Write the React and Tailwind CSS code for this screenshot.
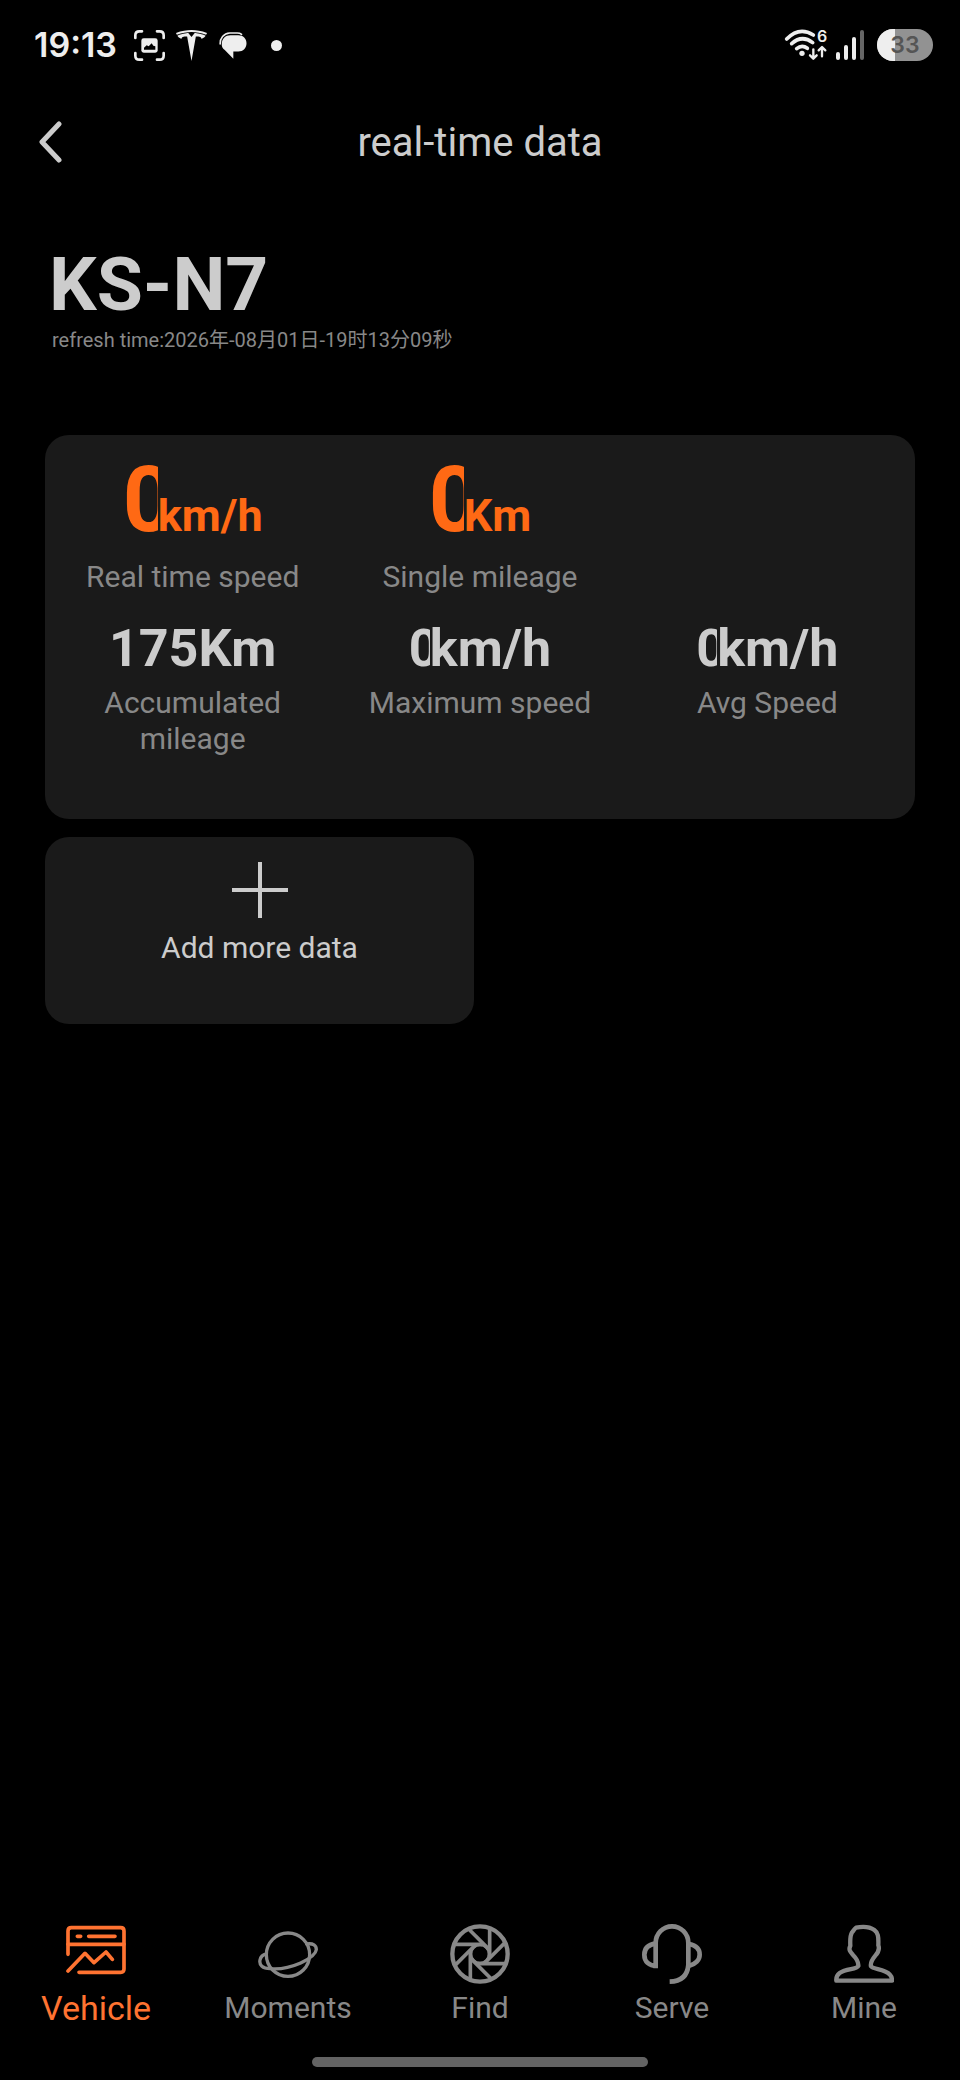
import { useState } from 'react'
import { SiTesla } from 'react-icons/si'

const mainStats = [
  { value: '0', unit: 'km/h', label: 'Real time speed' },
  { value: '0', unit: 'Km', label: 'Single mileage' },
]

const stats = [
  { value: '175', unit: 'Km', label: 'Accumulated mileage' },
  { value: '0', unit: 'km/h', label: 'Maximum speed' },
  { value: '0', unit: 'km/h', label: 'Avg Speed' },
]

const tabs = [
  { name: 'Vehicle', Icon: VehicleIcon },
  { name: 'Moments', Icon: PlanetIcon },
  { name: 'Find', Icon: ApertureIcon },
  { name: 'Serve', Icon: HeadsetIcon },
  { name: 'Mine', Icon: PersonIcon },
]

function TabSvg({ children }) {
  return (
    <svg
      viewBox="0 0 180 180"
      className="w-[60px] h-[60px]"
      fill="none"
      stroke="currentColor"
      strokeWidth="11"
      strokeLinecap="round"
      strokeLinejoin="round"
      aria-hidden="true"
    >
      {children}
    </svg>
  )
}

function VehicleIcon() {
  return (
    <TabSvg>
      <path d="M6 91V21Q6 11 16 11H164Q174 11 174 21V135Q174 145 164 145H39" />
      <path d="M6 61H174M34 37H44M68 37H147" />
      <path d="M6 141L57 88L84 116L120 84L139 106" />
    </TabSvg>
  )
}

function PlanetIcon() {
  return (
    <TabSvg>
      <g strokeWidth="10">
        <circle cx="90" cy="92" r="65" />
        <path d="M146 60C166 57 175 65 175 77C173 94 152 106 128 117C98 130 62 137 36 134C14 133 3 124 6 108C8 98 15 92 25 90" />
      </g>
    </TabSvg>
  )
}

function ApertureIcon() {
  const blades = [0, 45, 90, 135, 180, 225, 270, 315]
  return (
    <TabSvg>
      <g strokeWidth="13">
        <circle cx="90" cy="90" r="83" />
        <circle cx="90" cy="90" r="28" strokeWidth="10" />
        {blades.map((deg) => (
          <path key={deg} d="M119 16V96" strokeWidth="11" transform={`rotate(${deg} 90 90)`} />
        ))}
      </g>
    </TabSvg>
  )
}

function HeadsetIcon() {
  return (
    <TabSvg>
      <g strokeWidth="14" strokeLinecap="butt">
        <path d="M41 133V57A49 50 0 0 1 139 57V123Q135 172 83 173" />
        <path d="M41 58C17 62 7 76 7 92C7 112 20 125 44 125" />
        <path d="M142 60C163 64 173 76 173 92C173 108 160 121 142 125" />
      </g>
    </TabSvg>
  )
}

function PersonIcon() {
  return (
    <TabSvg>
      <path
        strokeWidth="13"
        d="M66 11C86 7 108 9 121 18C132 26 134 36 133 64C138 77 133 85 124 95C114 107 108 116 111 127C118 137 151 134 168 152C174 158 174 164 174 170H7C6 160 9 153 17 147C38 133 67 137 73 126C74 113 66 102 57 93C48 83 43 77 49 65C48 46 49 33 54 25C59 21 59 16 66 11Z"
      />
    </TabSvg>
  )
}

function StatusBar() {
  return (
    <div className="h-[90px] pl-[34px] pr-[27px] flex items-center justify-between text-[#eeeeee] font-['Inter',sans-serif]">
      <div className="flex items-center">
        <span className="text-[34px] leading-10 font-semibold">19:13</span>
        {/* Screenshot */}
        <svg viewBox="0 0 93 93" className="w-[31px] h-[31px] ml-[17px]" fill="none" stroke="currentColor" strokeWidth="8" strokeLinecap="round" aria-hidden="true">
          <path d="M4 24V16Q4 4 16 4H24M69 4H77Q89 4 89 16V24M89 69V77Q89 89 77 89H69M24 89H16Q4 89 4 77V69" />
          <rect x="22" y="25" width="49" height="43" rx="7" fill="currentColor" stroke="none" />
          <path d="M30 59V53L38 46L44 49L53 40L58 47L64 49V59Z" fill="#000" stroke="none" />
        </svg>
        <SiTesla className="w-[31px] h-[31px] ml-[11px]" />
        {/* Messages */}
        <svg viewBox="0 0 84 82" className="w-7 h-[27px] ml-3" fill="currentColor" aria-hidden="true">
          <path d="M34 10H58C73 10 83 20 83 34C83 49 73 59 58 59H43V81L17 55C10 50 7 43 8 35C9 20 19 10 34 10Z" />
          <path d="M3 36C2 20 14 4 32 3H55Q63 3 68 7" fill="none" stroke="currentColor" strokeWidth="5" strokeLinecap="round" />
        </svg>
        <span className="w-[11px] h-[11px] rounded-full bg-[#eeeeee] ml-6" />
      </div>

      <div className="flex items-center">
        {/* Wi-Fi 6 with traffic arrows */}
        <svg viewBox="130 87 129 96" className="w-[43px] h-8 overflow-visible" fill="none" stroke="currentColor" strokeLinecap="round" strokeLinejoin="round" aria-hidden="true">
          <path strokeWidth="11" d="M138 117Q176 78 218 105M153 131Q184 103 216 128M168 146Q184 133 200 145" />
          <circle cx="184" cy="160" r="8" fill="currentColor" stroke="none" />
          <path strokeWidth="7" d="M218 148V175M208 166L218 176L228 166M244 169V142M234 151L244 141L254 151" />
          <text x="229" y="127" fontSize="48" fontWeight="600" fill="currentColor" stroke="none">6</text>
        </svg>
        <div className="flex items-end gap-1 ml-[9px]">
          <span className="w-1 h-2 rounded-full bg-[#eeeeee]" />
          <span className="w-1 h-[15px] rounded-full bg-[#eeeeee]" />
          <span className="w-1 h-[23px] rounded-full bg-[#eeeeee]" />
          <span className="w-1 h-[30px] rounded-full bg-[#666666]" />
        </div>
        <div className="relative w-14 h-8 ml-[13px] rounded-full overflow-hidden bg-[#929292]">
          <div className="absolute inset-y-0 left-0 w-[18px] bg-[#eeeeee]" />
          <span className="relative block text-center text-[23px] leading-8 font-semibold text-[#555555]">33</span>
        </div>
      </div>
    </div>
  )
}

function MainStat({ value, unit, label }) {
  return (
    <div className="text-center">
      <div className="flex items-baseline justify-center font-bold text-[#ff6914]">
        <span className="w-[35px] overflow-hidden text-left text-[90px] leading-[100px]">{value}</span>
        <span className="text-[45px] leading-[64px]">{unit}</span>
      </div>
      <p className="mt-2 text-[30px] leading-9 text-[#888888]">{label}</p>
    </div>
  )
}

function Stat({ value, unit, label }) {
  return (
    <div className="text-center">
      <div className="flex items-baseline justify-center font-bold text-[52px] leading-[64px] text-[#cccccc]">
        {/* the value box is narrower than a lone digit */}
        <span className={value.length === 1 ? 'w-[21px] overflow-hidden text-left' : ''}>{value}</span>
        <span>{unit}</span>
      </div>
      <p className="mt-1 px-8 text-[30px] leading-9 text-[#888888]">{label}</p>
    </div>
  )
}

function App() {
  const [active, setActive] = useState('Vehicle')

  return (
    <div className="min-h-screen flex flex-col bg-black text-[#cccccc] font-['Roboto','Noto_Sans_CJK_SC',sans-serif]">
      <StatusBar />

      <header className="h-[106px] px-9 grid grid-cols-[1fr_auto_1fr] items-center">
        <button type="button" aria-label="Back" className="justify-self-start">
          <svg viewBox="0 0 28 44" className="w-7 h-11" fill="none" stroke="currentColor" strokeWidth="5" strokeLinecap="round" strokeLinejoin="round">
            <path d="M23 3L6 21L23 39" />
          </svg>
        </button>
        <h1 className="text-[40px] leading-[60px]">real-time data</h1>
      </header>

      <main className="px-[45px] pt-12">
        <h2 className="pl-1 text-[75px] leading-20 font-bold">KS-N7</h2>
        <p className="pl-[7px] text-[20px] leading-8 text-[#888888]">
          refresh time:2026年-08月01日-19时13分09秒
        </p>

        <section className="mt-[79px] px-1 pt-4 pb-[62px] rounded-3xl bg-[#1a1a1a]">
          <div className="grid grid-cols-3">
            {mainStats.map((s) => (
              <MainStat key={s.label} {...s} />
            ))}
          </div>
          <div className="grid grid-cols-3 mt-[22px]">
            {stats.map((s) => (
              <Stat key={s.label} {...s} />
            ))}
          </div>
        </section>

        <div className="mt-[18px] grid grid-cols-2 gap-3">
          <button type="button" className="flex flex-col items-center pt-[25px] pb-[58px] rounded-3xl bg-[#1a1a1a]">
            <svg viewBox="0 0 56 56" className="w-14 h-14" stroke="currentColor" strokeWidth="4" aria-hidden="true">
              <path d="M28 0V56M0 28H56" />
            </svg>
            <span className="mt-3 text-[30px] leading-9">Add more data</span>
          </button>
        </div>
      </main>

      <nav className="mt-auto grid grid-cols-5">
        {tabs.map(({ name, Icon }) => (
          <button
            key={name}
            type="button"
            onClick={() => setActive(name)}
            className={`flex flex-col items-center gap-1.5 ${
              active === name ? 'text-[34px] text-[#ff7331]' : 'text-[30px] text-[#888888]'
            }`}
          >
            <Icon />
            <span className="leading-9">{name}</span>
          </button>
        ))}
      </nav>

      {/* Home indicator */}
      <div className="mt-[31px] mb-[13px] w-[35%] h-2.5 mx-auto rounded-full bg-[#636363]" />
    </div>
  )
}

export default App
